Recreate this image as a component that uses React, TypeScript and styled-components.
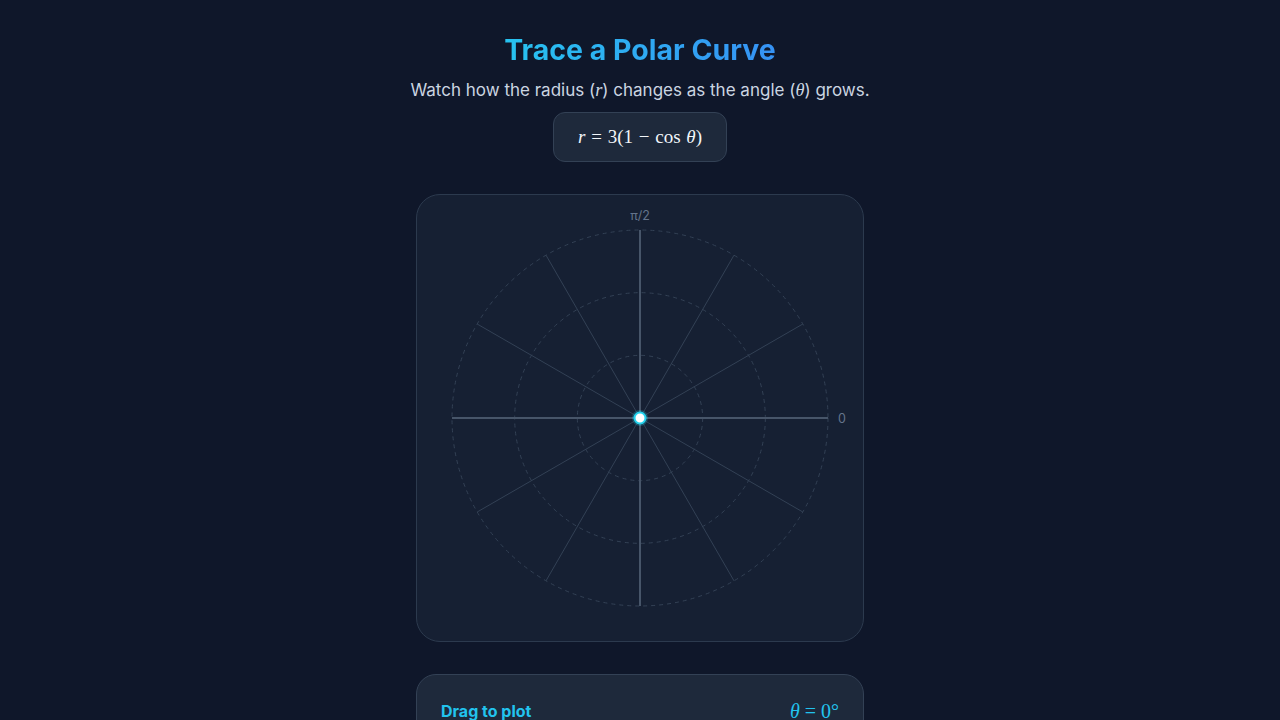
import React, { useState } from 'react';
import styled, { createGlobalStyle } from 'styled-components';

const GlobalStyle = createGlobalStyle`
  * { box-sizing: border-box; }
  body {
    margin: 0;
    background: #0f172a;
    font-family: Inter, "Noto Sans", sans-serif;
    color: #e2e8f0;
  }
`;

const Page = styled.div`
  width: 448px;
  margin: 0 auto;
  padding: 32px 0 48px;
  display: flex;
  flex-direction: column;
  gap: 32px;
`;

const Header = styled.header`
  display: flex;
  flex-direction: column;
  align-items: center;
  gap: 10px;
`;

const Title = styled.h1`
  margin: 0;
  width: 100%;
  text-align: center;
  font-size: 28.5px;
  line-height: 36px;
  font-weight: 700;
  background: linear-gradient(90deg, #22d3ee, #3b82f6);
  -webkit-background-clip: text;
  background-clip: text;
  color: transparent;
`;

const Subtitle = styled.p`
  margin: 0;
  font-size: 17px;
  line-height: 24px;
  color: #cbd5e1;
  white-space: nowrap;
`;

const MathVar = styled.span`
  font-family: "Liberation Serif", "DejaVu Serif", serif;
  font-style: italic;
  font-size: 1.08em;
`;

const FormulaBox = styled.div`
  padding: 12px 24px;
  background: #1e293b;
  border: 1px solid #334155;
  border-radius: 12px;
  font-family: "Liberation Serif", "DejaVu Serif", serif;
  font-size: 19px;
  line-height: 24px;
  color: #f1f5f9;
  white-space: nowrap;
  word-spacing: 1px;
`;

const PlotCard = styled.div`
  width: 448px;
  height: 448px;
  background: rgba(30, 41, 59, 0.5);
  border: 1px solid #2c3a4e;
  border-radius: 24px;
  overflow: hidden;

  svg { display: block; }
`;

const Panel = styled.div`
  background: #1e293b;
  border: 1px solid #334155;
  border-radius: 20px;
  padding: 24px;
  display: flex;
  flex-direction: column;
  gap: 16px;
`;

const PanelRow = styled.div`
  display: flex;
  justify-content: space-between;
  align-items: center;
  height: 24px;
`;

const PanelLabel = styled.span`
  font-size: 16px;
  font-weight: 700;
  color: #22c3ee;
`;

const AngleReadout = styled.span`
  font-family: "Liberation Serif", "DejaVu Serif", serif;
  font-size: 20px;
  color: #22c3ee;
`;

const Slider = styled.input`
  width: 100%;
  accent-color: #22d3ee;
`;

const C = 223;
const R = 188;

function PolarPlot({ theta }: { theta: number }) {
  const spokes = [30, 60, 120, 150, 210, 240, 300, 330];
  const rad = (d: number) => (d * Math.PI) / 180;
  const rOf = (t: number) => 3 * (1 - Math.cos(t));
  const scale = R / 6;

  const pts: string[] = [];
  for (let d = 0; d <= theta; d += 1) {
    const r = rOf(rad(d)) * scale;
    pts.push(`${C + r * Math.cos(rad(d))},${C - r * Math.sin(rad(d))}`);
  }
  const rNow = rOf(rad(theta)) * scale;
  const px = C + rNow * Math.cos(rad(theta));
  const py = C - rNow * Math.sin(rad(theta));

  return (
    <svg width="446" height="446" viewBox="0 0 446 446">
      {[R / 3, (2 * R) / 3, R].map((r) => (
        <circle key={r} cx={C} cy={C} r={r} fill="none" stroke="#334155" strokeWidth="1" strokeDasharray="4 4" />
      ))}
      {spokes.map((d) => (
        <line
          key={d}
          x1={C}
          y1={C}
          x2={C + R * Math.cos(rad(d))}
          y2={C - R * Math.sin(rad(d))}
          stroke="#334155"
          strokeWidth="1"
        />
      ))}
      <line x1={C - R} y1={C} x2={C + R} y2={C} stroke="#475569" strokeWidth="2" />
      <line x1={C} y1={C - R} x2={C} y2={C + R} stroke="#475569" strokeWidth="2" />
      <text x={C} y={25} textAnchor="middle" fill="#64748b" fontSize="12.5" fontFamily="Inter, sans-serif">π/2</text>
      <text x={C + R + 10} y={C + 4.5} textAnchor="start" fill="#64748b" fontSize="12.5" fontFamily="Inter, sans-serif">0</text>
      {pts.length > 1 && <polyline points={pts.join(' ')} fill="none" stroke="#22d3ee" strokeWidth="3" />}
      <circle cx={px} cy={py} r="8" fill="#22d3ee" opacity="0.25" />
      <circle cx={px} cy={py} r="5.5" fill="#ffffff" stroke="#22d3ee" strokeWidth="2" />
    </svg>
  );
}

export default function App() {
  const [theta, setTheta] = useState(0);
  return (
    <>
      <GlobalStyle />
      <Page>
        <Header>
          <Title>Trace a Polar Curve</Title>
          <Subtitle>
            Watch how the radius (<MathVar>r</MathVar>) changes as the angle (<MathVar>θ</MathVar>) grows.
          </Subtitle>
          <FormulaBox>
            <i>r</i> = 3(1 − cos <i>θ</i>)
          </FormulaBox>
        </Header>
        <PlotCard>
          <PolarPlot theta={theta} />
        </PlotCard>
        <Panel>
          <PanelRow>
            <PanelLabel>Drag to plot</PanelLabel>
            <AngleReadout>
              <i>θ</i> = {theta}°
            </AngleReadout>
          </PanelRow>
          <Slider type="range" min={0} max={360} value={theta} onChange={(e) => setTheta(Number(e.target.value))} />
        </Panel>
      </Page>
    </>
  );
}
